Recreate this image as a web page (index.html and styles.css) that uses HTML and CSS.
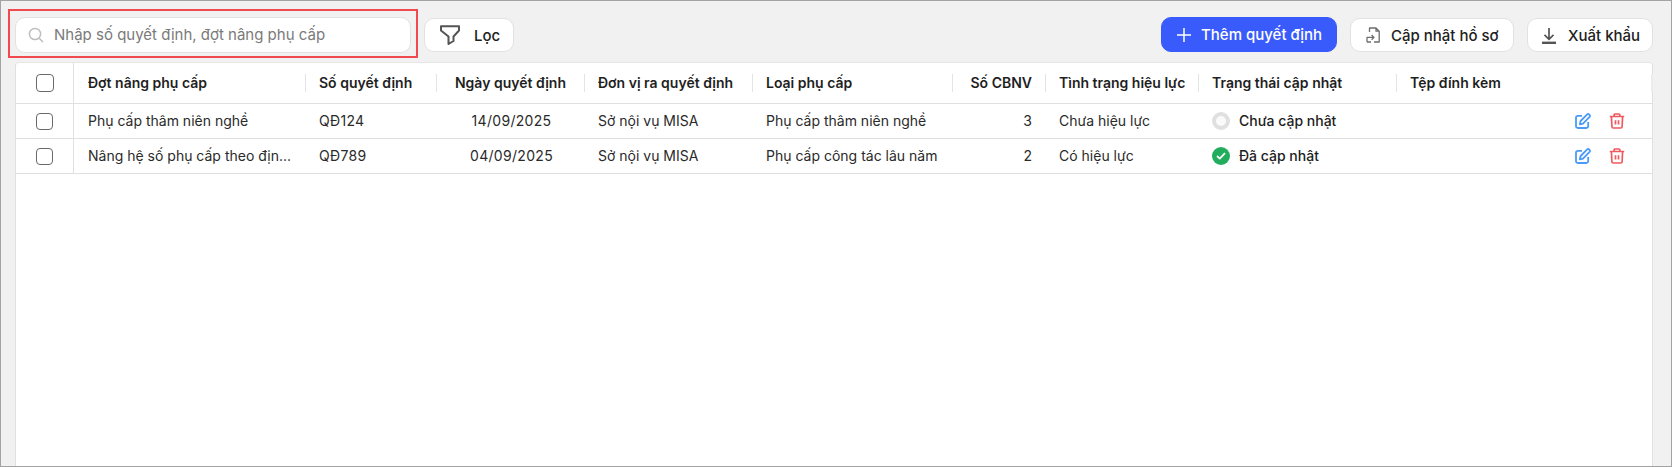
FILE: index.html
```html
<!DOCTYPE html>
<html lang="vi">
<head>
<meta charset="utf-8">
<title>Quyết định nâng phụ cấp</title>
<link rel="stylesheet" href="styles.css">
</head>
<body>
<div class="frame">
  <div class="toolbar">
    <div class="search">
      <svg class="ico-search" viewBox="0 0 16 16"><circle cx="7" cy="7" r="5.6"/><path d="M11.2 11.2 15 15"/></svg>
      <span class="placeholder">Nhập số quyết định, đợt nâng phụ cấp</span>
      <div class="highlight"></div>
    </div>
    <button class="btn filter">
      <svg class="ico-filter" viewBox="0 0 20 20"><path d="M1 1.200h18v4.300l-5.500 6v4.500l-5 3v-7.500l-7.500-6z"/></svg>
      <span>Lọc</span>
    </button>
    <div class="spacer"></div>
    <button class="btn primary">
      <svg class="ico-plus" viewBox="0 0 14 14"><path d="M7 0v14M0 7h14"/></svg>
      <span>Thêm quyết định</span>
    </button>
    <button class="btn update">
      <svg class="ico-update" viewBox="0 0 14 16"><path d="M3.500 5V1h6.500l3.200 3.200V15H8M10 1v3.200h3.200M1 15v-4.600h7M5.600 8l2.400 2.400-2.400 2.400M1 15h4"/></svg>
      <span>Cập nhật hồ sơ</span>
    </button>
    <button class="btn export">
      <svg class="ico-export" viewBox="0 0 16 17"><path d="M8 1v11M3.500 7.800 8 12.300l4.500-4.500"/><path class="base" d="M1 15.800h14"/></svg>
      <span>Xuất khẩu</span>
    </button>
  </div>
  <div class="panel">
    <table class="grid">
      <colgroup>
        <col class="c0"><col class="c1"><col class="c2"><col class="c3"><col class="c4"><col class="c5"><col class="c6"><col class="c7"><col class="c8"><col class="c9"><col class="c10">
      </colgroup>
      <thead>
        <tr>
          <th class="chk"><span class="box big"></span></th>
          <th class="sep first">Đợt nâng phụ cấp</th>
          <th class="sep">Số quyết định</th>
          <th class="sep ctr">Ngày quyết định</th>
          <th class="sep">Đơn vị ra quyết định</th>
          <th class="sep">Loại phụ cấp</th>
          <th class="sep rt">Số CBNV</th>
          <th class="sep">Tình trạng hiệu lực</th>
          <th class="sep">Trạng thái cập nhật</th>
          <th>Tệp đính kèm</th>
          <th class="sep end"></th>
        </tr>
      </thead>
      <tbody>
        <tr>
          <td class="chk"><span class="box"></span></td>
          <td class="first">Phụ cấp thâm niên nghề</td>
          <td class="num">QĐ124</td>
          <td class="ctr num date">14/09/2025</td>
          <td>Sở nội vụ MISA</td>
          <td>Phụ cấp thâm niên nghề</td>
          <td class="rt">3</td>
          <td>Chưa hiệu lực</td>
          <td><span class="status"><span class="dot pending"></span>Chưa cập nhật</span></td>
          <td></td>
          <td class="act-cell">
            <span class="actions">
              <svg class="ico-edit" viewBox="0 0 16 16"><path d="M7 2.800H2.800A1.800 1.800 0 0 0 1 4.600v8.600A1.800 1.800 0 0 0 2.800 15h8.600a1.800 1.800 0 0 0 1.800-1.800V9"/><path d="M4.800 11.400 5.600 8 12.200 1.400a1.300 1.300 0 0 1 1.900 0l.5.5a1.300 1.300 0 0 1 0 1.900L8 10.600z"/></svg>
              <svg class="ico-trash" viewBox="0 0 16 16"><path d="M.8 3.500h14.400M5.200 3.300V1.800q0-.8.800-.8h4q.8 0 .8.8v1.500M2.400 3.500l.5 10.200q.1 1.300 1.400 1.300h7.400q1.300 0 1.400-1.300l.5-10.200M6.500 7.200v4.200M9.500 7.200v4.200"/></svg>
            </span>
          </td>
        </tr>
        <tr>
          <td class="chk"><span class="box"></span></td>
          <td class="first">Nâng hệ số phụ cấp theo địn...</td>
          <td class="num">QĐ789</td>
          <td class="ctr num date">04/09/2025</td>
          <td>Sở nội vụ MISA</td>
          <td>Phụ cấp công tác lâu năm</td>
          <td class="rt">2</td>
          <td>Có hiệu lực</td>
          <td><span class="status"><span class="dot done"><svg viewBox="0 0 10 8"><path d="M1 4l2.800 2.600L9 1.200"/></svg></span>Đã cập nhật</span></td>
          <td></td>
          <td class="act-cell">
            <span class="actions">
              <svg class="ico-edit" viewBox="0 0 16 16"><path d="M7 2.800H2.800A1.800 1.800 0 0 0 1 4.600v8.600A1.800 1.800 0 0 0 2.800 15h8.600a1.800 1.800 0 0 0 1.800-1.800V9"/><path d="M4.800 11.400 5.600 8 12.200 1.400a1.300 1.300 0 0 1 1.900 0l.5.5a1.300 1.300 0 0 1 0 1.900L8 10.600z"/></svg>
              <svg class="ico-trash" viewBox="0 0 16 16"><path d="M.8 3.500h14.400M5.200 3.300V1.800q0-.8.800-.8h4q.8 0 .8.8v1.500M2.400 3.500l.5 10.200q.1 1.300 1.400 1.300h7.400q1.300 0 1.400-1.300l.5-10.200M6.500 7.200v4.200M9.500 7.200v4.200"/></svg>
            </span>
          </td>
        </tr>
      </tbody>
    </table>
  </div>
</div>
</body>
</html>
```
FILE: styles.css
```css
* { box-sizing: border-box; }
html, body { margin: 0; height: 467px; overflow: hidden; }
body { font-family: Inter, "Noto Sans", sans-serif; font-size: 14px; color: #212121; }
.frame {
  height: 467px;
  background: #f1f1f1;
  border: 1px solid #a3a3a3;
  padding: 16px 18px 0 14px;
  display: flex;
  flex-direction: column;
}
.toolbar { display: flex; align-items: flex-start; height: 36px; flex: none; }
.spacer { flex: 1; }
.search {
  position: relative;
  width: 396px;
  height: 36px;
  background: #fff;
  border: 1px solid #e2e2e2;
  border-radius: 10px;
  display: flex;
  align-items: center;
  padding-left: 12px;
}
.highlight {
  position: absolute;
  left: -8px; top: -9px;
  width: 410px; height: 49px;
  border: 2px solid #f04a50;
  pointer-events: none;
}
.ico-search { width: 16px; height: 16px; fill: none; stroke: #bdbdbd; stroke-width: 1.5; flex: none; }
.placeholder { margin-left: 10px; padding-bottom: 2px; color: #7a7a7a; font-size: 15px; }
.btn {
  height: 34px;
  margin-top: 1px;
  background: #fff;
  border: 1px solid #e2e2e2;
  border-radius: 10px;
  display: flex;
  align-items: center;
  font: 500 15px Inter, "Noto Sans", sans-serif;
  color: #212121;
  padding: 0;
}
.filter { margin-left: 13px; width: 90px; padding-left: 15px; gap: 14px; }
.ico-filter { width: 20px; height: 20px; fill: none; stroke: #555; stroke-width: 2; stroke-linejoin: round; }
.primary {
  width: 176px; height: 35px;
  margin-top: 0;
  background: #3a5bfb;
  border-color: #3a5bfb;
  color: #fff;
  padding-left: 15px;
  gap: 10px;
}
.ico-plus { width: 14px; height: 14px; fill: none; stroke: #fff; stroke-width: 1.5; }
.update { margin-left: 13px; width: 164px; padding-left: 15px; gap: 11px; }
.ico-update { width: 14px; height: 16px; fill: none; stroke: #6e6e6e; stroke-width: 1.3; stroke-linejoin: round; }
.export { margin-left: 13px; width: 126px; padding-left: 13px; gap: 11px; }
.ico-export { width: 16px; height: 17px; fill: none; stroke: #555; stroke-width: 1.7; }
.ico-export .base { stroke-width: 2.4; }
.panel {
  flex: 1;
  margin-top: 9px;
  background: #fff;
  border-left: 1px solid #e0e0e0;
  border-top: 1px solid #e6e6e6;
  border-right: 1px solid #e0e0e0;
  border-radius: 4px 4px 0 0;
}
.grid { width: 100%; table-layout: fixed; border-collapse: separate; border-spacing: 0; }
.c0 { width: 58px; } .c1 { width: 232px; } .c2 { width: 131px; } .c3 { width: 148px; }
.c4 { width: 168px; } .c5 { width: 200px; } .c6 { width: 93px; } .c7 { width: 153px; }
.c8 { width: 198px; } .c9 { width: 174px; } .c10 { width: 82px; }
th, td {
  padding: 0 14px 1px 13px;
  text-align: left;
  white-space: nowrap;
  border-bottom: 1px solid #e0e0e0;
  font-size: 14px;
}
th { height: 41px; font-weight: 600; position: relative; color: #1f1f1f; }
td { height: 35px; font-weight: 400; color: #2a2a2a; }
.num { letter-spacing: .3px; }
.date { padding-left: 15px; }
.first { padding-left: 14px; }
.sep::after {
  content: "";
  position: absolute;
  right: 0; top: 11px;
  width: 1px; height: 18px;
  background: #e4e4e4;
}
.sep.end::after { width: 2px; background: #ececec; }
.ctr { text-align: center; }
.rt { text-align: right; }
.chk { padding: 0; text-align: center; border-right: 1px solid #e0e0e0; }
.box {
  display: block;
  width: 17px; height: 17px;
  margin: 0 auto;
  border: 1px solid #6a6a6a;
  border-radius: 4px;
  background: #fff;
}
.box.big { width: 18px; height: 18px; }
.status { display: flex; align-items: center; gap: 9px; font-weight: 500; color: #212121; }
.dot { width: 18px; height: 18px; border-radius: 50%; flex: none; display: flex; align-items: center; justify-content: center; }
.pending { border: 4px solid #e0e0e0; background: #fafafa; }
.done { background: #22ad5c; }
.done svg { width: 10px; height: 8px; fill: none; stroke: #fff; stroke-width: 1.8; }
.act-cell { padding: 0 0 0 4px; }
.actions { display: flex; gap: 18px; }
.ico-edit { width: 16px; height: 16px; fill: none; stroke: #4a9bf8; stroke-width: 1.8; stroke-linejoin: round; flex: none; }
.ico-trash { width: 16px; height: 16px; fill: none; stroke: #ee5a5f; stroke-width: 1.7; flex: none; }
```
